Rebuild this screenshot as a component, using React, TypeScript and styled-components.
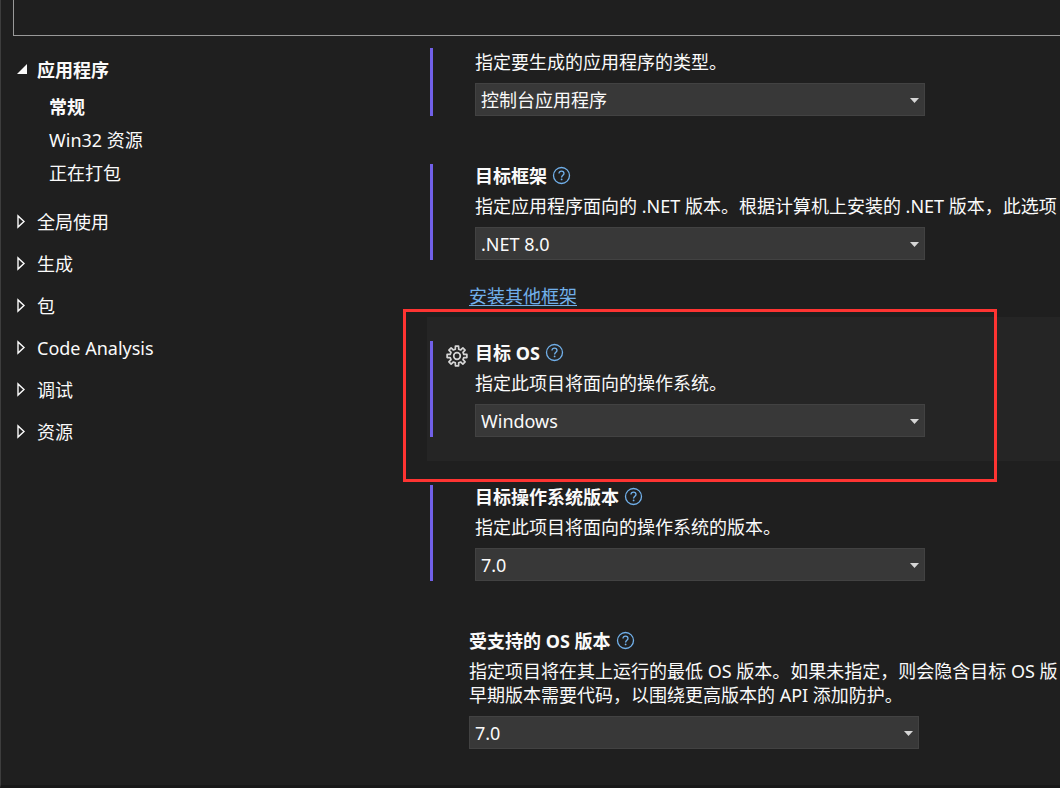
import React from "react";
import styled, { createGlobalStyle, css } from "styled-components";

const GlobalStyle = createGlobalStyle`
  * { box-sizing: border-box; }
  body {
    margin: 0;
    background: #1f1f1f;
    color: #fafafa;
    font: 18px/24px "Noto Sans", "Noto Sans CJK SC", sans-serif;
    overflow: hidden;
  }
`;

const Page = styled.div`
  min-height: 100vh;
  display: flex;
  flex-direction: column;
  border-left: 1px solid #3d3d3d;
  border-bottom: 3px solid #181818;
`;

const SearchBar = styled.header`
  height: 36px;
  margin-left: 12px;
  border: solid #999999;
  border-width: 0 0 1px 1px;
`;

const Body = styled.div`
  flex: 1;
  display: grid;
  grid-template-columns: 426px minmax(0, 1fr);
`;

const Sidebar = styled.nav`
  padding: 13px 16px;
`;

const TreeItem = styled.button<{ $active?: boolean }>`
  display: flex;
  align-items: center;
  gap: 8px;
  width: 100%;
  height: 42px;
  padding: 0;
  border: 0;
  background: none;
  color: inherit;
  font: inherit;
  font-weight: ${(p) => (p.$active ? 700 : 400)};
  text-align: left;
`;

const SubList = styled.ul`
  margin: 0;
  padding: 0 0 11px 32px;
  list-style: none;
`;

const SubLink = styled.a<{ $active?: boolean }>`
  display: block;
  line-height: 33px;
  color: inherit;
  text-decoration: none;
  font-weight: ${(p) => (p.$active ? 700 : 400)};
`;

const Main = styled.main`
  padding-top: 12px;
`;

const Setting = styled.section<{ $highlight?: boolean; $first?: boolean }>`
  position: relative;
  padding: ${(p) => (p.$first ? "0" : "24px")} 0 24px 3px;
  background: ${(p) => (p.$highlight ? "#252525" : "none")};
`;

const Field = styled.div<{ $modified?: boolean; $untitled?: boolean }>`
  display: grid;
  grid-template-columns: ${(p) => (p.$modified ? "42px" : "39px")} minmax(0, 1fr);
  padding-top: ${(p) => (p.$untitled ? "2px" : "0")};
  ${(p) => p.$modified && css`border-left: 3px solid #7160e8;`}
`;

const GearButton = styled.button`
  align-self: start;
  display: flex;
  margin: 4px 0 0 13px;
  padding: 0;
  border: 0;
  background: none;
`;

const Content = styled.div`
  grid-column: 2;
  grid-row: 1;
  min-width: 0;
`;

const TitleRow = styled.div`
  display: flex;
  align-items: center;
  gap: 5px;
  height: 24px;
  margin-bottom: 6px;
`;

const Title = styled.label`
  font-weight: 700;
`;

const HelpButton = styled.button`
  display: flex;
  padding: 0 0 2px;
  border: 0;
  background: none;
`;

const Description = styled.p`
  margin: 0 0 9px;
  white-space: pre;
  overflow: hidden;
`;

const SelectBox = styled.div`
  display: grid;
  align-items: center;
  max-width: 450px;

  > * { grid-area: 1 / 1; }
  > svg {
    justify-self: end;
    margin: 2px 6px 0 0;
    pointer-events: none;
  }
`;

const Select = styled.select`
  appearance: none;
  width: 100%;
  height: 33px;
  padding: 0 24px 0 5px;
  border: 1px solid #424242;
  border-radius: 0;
  background: #383838;
  color: inherit;
  font: inherit;
`;

const InstallLink = styled.a`
  display: block;
  margin: 0 0 9px 42px;
  color: #71b0ea;
  text-underline-offset: 2px;
`;

const Marker = styled.div`
  position: absolute;
  z-index: 1;
  inset: -8px 63px -21px -24px;
  border: 3px solid #fe3432;
  pointer-events: none;
`;

const Triangle = ({ open }: { open?: boolean }) => (
  <svg width="12" height="16" viewBox="0 0 12 16" aria-hidden="true">
    {open ? (
      <path d="M10 2V12H0z" fill="#fafafa" />
    ) : (
      <path d="M1 1.9V13.1L7 7.5z" fill="none" stroke="#fafafa" strokeWidth="1.4" />
    )}
  </svg>
);

const HelpIcon = () => (
  <svg width="19" height="19" viewBox="0 0 19 19" fill="none" stroke="#71b0ea" aria-hidden="true">
    <circle cx="9.5" cy="9.5" r="8" strokeWidth="1.3" />
    <path d="M7 7.6C7 6.1 8 5.1 9.5 5.1s2.5 1 2.5 2.3c0 1.7-2.4 2-2.4 4" strokeWidth="1.3" />
    <circle cx="9.6" cy="13.4" r="0.9" fill="#71b0ea" stroke="none" />
  </svg>
);

const teeth = Array.from({ length: 8 }, (_, i) => {
  const at = (r: number, deg: number) => {
    const a = ((i * 45 + deg - 90) * Math.PI) / 180;
    return `${(11 + r * Math.cos(a)).toFixed(2)} ${(11 + r * Math.sin(a)).toFixed(2)}`;
  };
  return `${i ? "L" : "M"}${at(7, -14)}L${at(10, -9)}L${at(10, 9)}L${at(7, 14)}`;
}).join("");

const GearIcon = () => (
  <svg width="22" height="22" viewBox="0 0 22 22" fill="none" stroke="#d6d6d6" strokeWidth="1.7" strokeLinejoin="round" aria-hidden="true">
    <path d={`${teeth}Z`} />
    <circle cx="11" cy="11" r="3.3" />
  </svg>
);

const DropArrow = () => (
  <svg width="9" height="5" viewBox="0 0 9 5" aria-hidden="true">
    <path d="M0 0H9L4.5 5z" fill="#d6d6d6" />
  </svg>
);

type PropertyProps = {
  id: string;
  title?: string;
  description: string;
  value: string;
  modified?: boolean;
  selected?: boolean;
};

const Property = ({ id, title, description, value, modified, selected }: PropertyProps) => (
  <Setting $highlight={selected} $first={!title}>
    <Field $modified={modified} $untitled={!title}>
      {selected && (
        <GearButton type="button">
          <GearIcon />
        </GearButton>
      )}
      <Content>
        {title && (
          <TitleRow>
            <Title htmlFor={id}>{title}</Title>
            <HelpButton type="button">
              <HelpIcon />
            </HelpButton>
          </TitleRow>
        )}
        <Description id={`${id}-description`}>{description}</Description>
        <SelectBox>
          <Select id={id} aria-describedby={`${id}-description`}>
            <option>{value}</option>
          </Select>
          <DropArrow />
        </SelectBox>
      </Content>
    </Field>
    {selected && <Marker />}
  </Setting>
);

const sections = ["全局使用", "生成", "包", "Code Analysis", "调试", "资源"];

export default function App() {
  return (
    <>
      <GlobalStyle />
      <Page>
        <SearchBar />
        <Body>
          <Sidebar>
            <TreeItem type="button" $active>
              <Triangle open />
              应用程序
            </TreeItem>
            <SubList>
              <li><SubLink href="#general" $active>常规</SubLink></li>
              <li><SubLink href="#win32">Win32 资源</SubLink></li>
              <li><SubLink href="#package">正在打包</SubLink></li>
            </SubList>
            {sections.map((name) => (
              <TreeItem type="button" key={name}>
                <Triangle />
                {name}
              </TreeItem>
            ))}
          </Sidebar>
          <Main>
            <Property id="output-type" description="指定要生成的应用程序的类型。" value="控制台应用程序" modified />
            <Property
              id="framework"
              title="目标框架"
              description="指定应用程序面向的 .NET 版本。根据计算机上安装的 .NET 版本，此选项"
              value=".NET 8.0"
              modified
            />
            <InstallLink href="#install">安装其他框架</InstallLink>
            <Property id="target-os" title="目标 OS" description="指定此项目将面向的操作系统。" value="Windows" modified selected />
            <Property id="os-version" title="目标操作系统版本" description="指定此项目将面向的操作系统的版本。" value="7.0" modified />
            <Property
              id="supported-version"
              title="受支持的 OS 版本"
              description={"指定项目将在其上运行的最低 OS 版本。如果未指定，则会隐含目标 OS 版\n早期版本需要代码，以围绕更高版本的 API 添加防护。"}
              value="7.0"
            />
          </Main>
        </Body>
      </Page>
    </>
  );
}
